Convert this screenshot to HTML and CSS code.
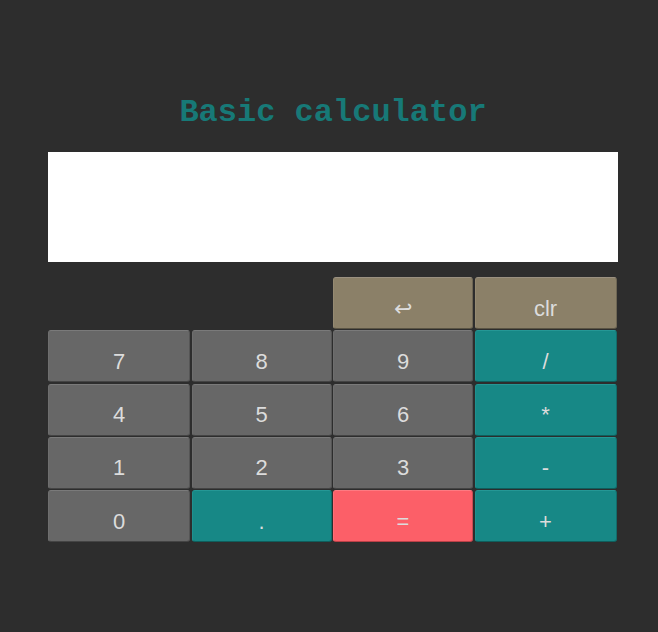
FILE: index.html
```html
<!DOCTYPE html>
<html>
<head>
<meta charset="utf-8">
<link rel="stylesheet" href="styles.css">
</head>
<body>
<main class="calc">
  <h1 class="title">Basic calculator</h1>
  <div class="display"></div>
  <div class="keys">
    <span class="spacer"></span>
    <button class="key fn">&#8617;</button>
    <button class="key fn">clr</button>
    <button class="key">7</button>
    <button class="key">8</button>
    <button class="key">9</button>
    <button class="key op">/</button>
    <button class="key">4</button>
    <button class="key">5</button>
    <button class="key">6</button>
    <button class="key op">*</button>
    <button class="key">1</button>
    <button class="key">2</button>
    <button class="key">3</button>
    <button class="key op">-</button>
    <button class="key">0</button>
    <button class="key op">.</button>
    <button class="key eq">=</button>
    <button class="key op">+</button>
  </div>
</main>
</body>
</html>
```
FILE: styles.css
```css
html, body {
  margin: 0;
  padding: 0;
  background: #2d2d2d;
  height: 100%;
}
.calc {
  width: 570px;
  margin: 0 auto;
  padding-top: 96px;
  padding-left: 8px;
}
.title {
  margin: 0 0 22px;
  text-align: center;
  font-family: "Liberation Mono", "Courier New", monospace;
  font-weight: bold;
  font-size: 32px;
  line-height: 34px;
  color: #177977;
}
.display {
  height: 110px;
  background: #fff;
  margin-bottom: 15px;
}
.keys {
  display: grid;
  grid-template-columns: 142px 140px 140px 142px;
  grid-template-rows: repeat(5, 52px);
  column-gap: 1.5px;
  row-gap: 1.25px;
}
.spacer {
  grid-column: span 2;
}
.key {
  margin: 0;
  padding: 11px 0 0;
  border: 1px solid;
  border-color: #7a7a7a #555 #444 #6e6e6e;
  border-radius: 3px;
  background: #676767;
  color: #dcdcdc;
  font-family: "Liberation Sans", Arial, sans-serif;
  font-size: 22px;
  line-height: 26px;
}
.fn {
  background: #8b8068;
  border-color: #9a9080 #6e6654 #5a5444 #958a72;
}
.op {
  background: #178886;
  border-color: #259795 #136c6a #0f5e5c #1f918f;
}
.eq {
  background: #fc5f68;
  border-color: #fd7b82 #c84a52 #b94047 #fd6f77;
}
```
